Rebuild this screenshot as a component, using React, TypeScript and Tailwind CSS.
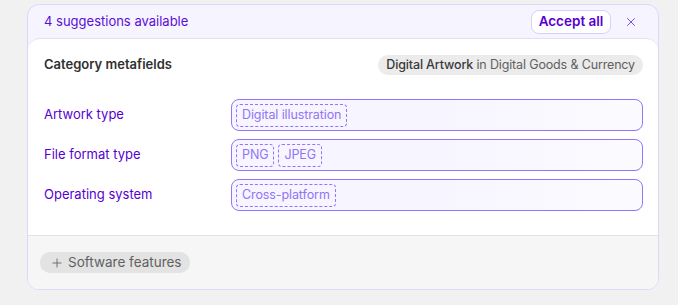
import { X, Plus } from 'lucide-react';

const rows = [
  { label: 'Artwork type', values: ['Digital illustration'] },
  { label: 'File format type', values: ['PNG', 'JPEG'] },
  { label: 'Operating system', values: ['Cross-platform'] },
];

export default function App() {
  return (
    <div
      className="w-[678px] h-[305px] bg-[#f1f1f1] pt-[4px] pl-[27px] pr-[19px]"
      style={{ fontFamily: 'Inter, "Noto Sans", sans-serif' }}
    >
      <div className="h-[286px] rounded-xl border border-[#ddd7fb] bg-[#f6f4ff] overflow-hidden flex flex-col">
        {/* suggestions header */}
        <div className="h-[33px] flex items-center justify-between pl-4 pr-[15px]">
          <span className="text-[13px] text-[#5b0fd6]">4 suggestions available</span>
          <div className="flex items-center gap-2">
            <button className="h-6 w-[80px] rounded-lg border border-[#d9cefe] bg-white text-[13.5px] font-semibold text-[#5700d1]">
              Accept all
            </button>
            <button className="w-6 h-6 flex items-center justify-center text-[#7a4cf5]">
              <X size={14} strokeWidth={1.7} />
            </button>
          </div>
        </div>

        {/* metafields card */}
        <div className="flex-1 bg-white rounded-t-xl border-t border-[#e2ddfb] flex flex-col">
          <div className="pl-4 pr-[15px] pt-[16px] pb-6">
            <div className="h-5 flex items-center justify-between">
              <span className="text-[13px] font-semibold text-[#303030]">Category metafields</span>
              <span className="h-5 px-2 rounded-full bg-[#ebebeb] text-[12.5px] tracking-[-0.15px] text-[#616161] flex items-center">
                <span className="text-[#3a3a3a] font-medium">Digital Artwork</span>&nbsp;in Digital Goods &amp; Currency
              </span>
            </div>

            <div className="mt-6 flex flex-col gap-2">
              {rows.map((row) => (
                <div key={row.label} className="grid grid-cols-[187px_1fr] items-center">
                  <span className="text-[13px] text-[#5700d1]">{row.label}</span>
                  <div className="h-8 rounded-lg border border-[#9474ff] bg-gradient-to-r from-[#f7f5ff] via-[#f7f5ff] to-[#fcfbff] flex items-center gap-1 px-1">
                    {row.values.map((v) => (
                      <span
                        key={v}
                        className="h-[23px] px-[5px] rounded border border-dashed border-[#9474ff] text-[12.5px] tracking-[-0.1px] text-[#9274f5] flex items-center"
                      >
                        {v}
                      </span>
                    ))}
                  </div>
                </div>
              ))}
            </div>
          </div>

          {/* footer */}
          <div className="flex-1 bg-[#f6f6f6] border-t border-[#e3e3e3] pl-3 pt-4">
            <button className="h-[21px] w-[150px] rounded-[10px] bg-[#e3e3e3] text-[13.5px] text-[#616161] flex items-center gap-1 pl-[10px]">
              <Plus size={14} strokeWidth={1.6} className="text-[#6a6a6a]" />
              Software features
            </button>
          </div>
        </div>
      </div>
    </div>
  );
}
